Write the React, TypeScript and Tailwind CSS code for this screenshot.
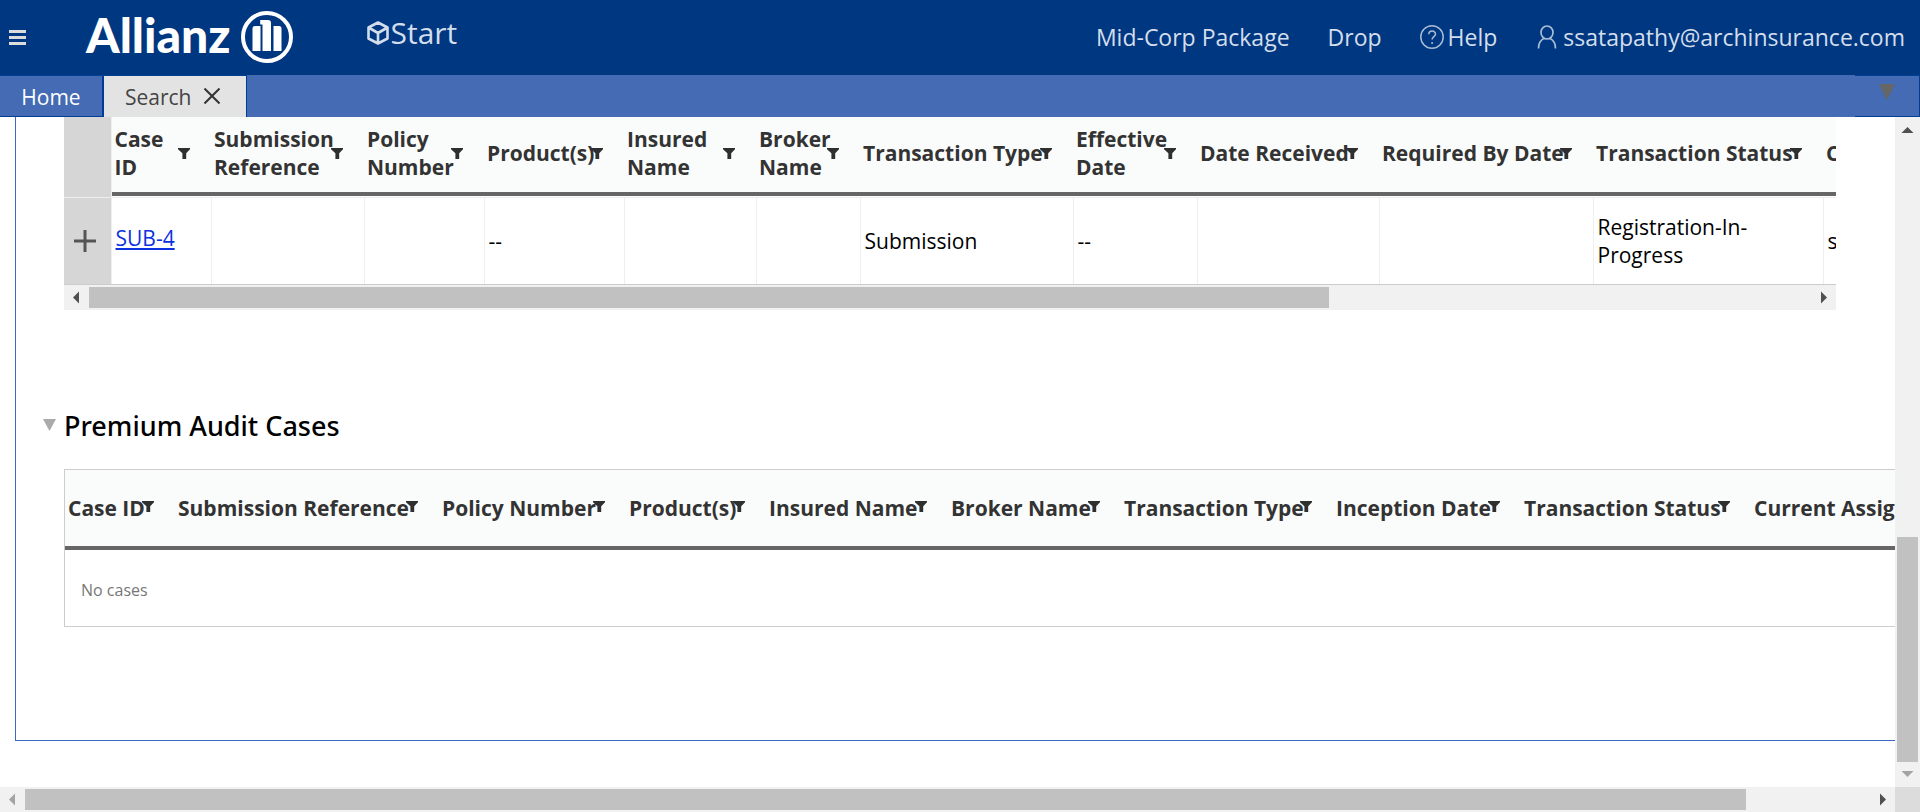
import React from 'react';

type Column = { label: string; width: number; narrow?: boolean; value?: string };

const submissionColumns: Column[] = [
  { label: 'Case ID', width: 100, narrow: true },
  { label: 'Submission Reference', width: 153, narrow: true },
  { label: 'Policy Number', width: 120, narrow: true },
  { label: 'Product(s)', width: 140, value: '--' },
  { label: 'Insured Name', width: 132, narrow: true },
  { label: 'Broker Name', width: 104, narrow: true },
  { label: 'Transaction Type', width: 213, value: 'Submission' },
  { label: 'Effective Date', width: 124, narrow: true, value: '--' },
  { label: 'Date Received', width: 182 },
  { label: 'Required By Date', width: 214 },
  { label: 'Transaction Status', width: 230, value: 'Registration-In-Progress' },
  { label: 'Current Assignment', width: 240, value: 'ssatapathy' },
];

const auditColumns: Column[] = [
  { label: 'Case ID', width: 110 },
  { label: 'Submission Reference', width: 264 },
  { label: 'Policy Number', width: 187 },
  { label: 'Product(s)', width: 140 },
  { label: 'Insured Name', width: 182 },
  { label: 'Broker Name', width: 173 },
  { label: 'Transaction Type', width: 212 },
  { label: 'Inception Date', width: 188 },
  { label: 'Transaction Status', width: 230 },
  { label: 'Current Assignment', width: 240 },
];

function FilterButton({ label }: { label: string }) {
  return (
    <button type="button" aria-label={`Filter ${label}`} className="absolute top-[31px] right-[21px]">
      <svg viewBox="0 0 12 11" className="h-[11px] w-3" fill="#2f2f2f" aria-hidden="true">
        <path d="M0 0h12v1.2L8.2 5.2V11H4.4V5.2L0 1.2z" />
      </svg>
    </button>
  );
}

function HeaderLabel({ column }: { column: Column }) {
  return (
    <>
      <span className={column.narrow ? 'w-16' : 'whitespace-nowrap'}>{column.label}</span>
      <FilterButton label={column.label} />
    </>
  );
}

function Columns({ columns }: { columns: Column[] }) {
  return (
    <>
      {columns.map((c) => (
        <col key={c.label} style={{ width: c.width }} />
      ))}
    </>
  );
}

function Arrow({ direction, muted }: { direction: 'left' | 'right' | 'up' | 'down'; muted?: boolean }) {
  const points = {
    left: '9,12.5 15,6.5 15,18.5',
    right: '16,12.5 10,6.5 10,18.5',
    up: '12.5,10 6.5,16 18.5,16',
    down: '12.5,15 6.5,9 18.5,9',
  };
  return (
    <svg viewBox="0 0 25 25" className="size-[25px] shrink-0" fill={muted ? '#a3a3a3' : '#505050'} aria-hidden="true">
      <polygon points={points[direction]} />
    </svg>
  );
}

function HorizontalBar({ size, muted }: { size: number; muted?: boolean }) {
  return (
    <div className="flex h-[25px] bg-[#f1f1f1]">
      <Arrow direction="left" muted={muted} />
      <div className="min-w-0 flex-1 py-0.5">
        <div className="h-full bg-[#c1c1c1]" style={{ width: `${size}%` }} />
      </div>
      <Arrow direction="right" />
    </div>
  );
}

function TopBar() {
  return (
    <header className="flex h-[75px] shrink-0 items-center bg-[#003781] text-[#d3deec]">
      <button type="button" aria-label="Menu" className="ml-[9px] flex w-[17px] flex-col gap-[3px]">
        <span className="h-[3px] bg-[#dcdcdc]" />
        <span className="h-[3px] bg-[#dcdcdc]" />
        <span className="h-[3px] bg-[#dcdcdc]" />
      </button>
      <a href="#home" className="ml-[60px] flex items-center gap-[10px] pb-0.5 text-white">
        <span className="pb-1 font-[Lato,sans-serif] text-[48px] leading-[60px] font-black">Allianz</span>
        <svg viewBox="0 0 52 52" className="size-[52px]" fill="none" aria-hidden="true">
          <circle cx="26" cy="26" r="24" stroke="currentColor" strokeWidth="4" />
          <path
            fill="currentColor"
            d="M11.500 40V17.500q0-2.500 2.500-2.500H19.500V40zM21.500 40V13.500h-2.300V9H27q3 0 3 3V40zM32.500 40V15H38q2.500 0 2.500 2.500V40z"
          />
        </svg>
      </a>
      <a href="#start" className="mb-2.5 ml-[74px] flex items-center gap-0.5 text-[30px] leading-10">
        <svg viewBox="0 0 22 24" className="h-6 w-[22px]" fill="none" stroke="currentColor" strokeWidth="2.600" strokeLinejoin="round" aria-hidden="true">
          <path d="M11 1.500 20.500 6.500v11L11 22.500 1.500 17.500v-11zM1.500 6.500 11 12l9.500-5.500M11 12v10.500" />
        </svg>
        Start
      </a>
      <nav className="mr-[15px] mb-0.5 ml-auto flex items-center text-[23px] leading-8">
        <a href="#package">Mid-Corp Package</a>
        <a href="#drop" className="ml-[38px]">Drop</a>
        <a href="#help" className="ml-[38px] flex items-center gap-1">
          <svg viewBox="0 0 24 24" className="size-6 opacity-80" fill="none" stroke="currentColor" strokeWidth="1.500" aria-hidden="true">
            <circle cx="12" cy="12" r="11.200" />
            <path d="M8.800 9.300c0-4.300 6.700-4.200 6.700-.3 0 2.700-3.400 2.700-3.400 5.500M12.100 17v2" />
          </svg>
          Help
        </a>
        <a href="#profile" className="ml-10 flex items-center gap-1.5">
          <svg viewBox="0 0 20 24" className="h-6 w-5 opacity-80" fill="none" stroke="currentColor" strokeWidth="1.700" aria-hidden="true">
            <ellipse cx="10" cy="7.500" rx="6" ry="6.500" />
            <path d="M1.500 23.500c0-5 2-8.300 5.600-10.200M18.500 23.500c0-5-2-8.300-5.600-10.200" />
          </svg>
          ssatapathy@archinsurance.com
        </a>
      </nav>
    </header>
  );
}

function TabBar() {
  return (
    <div role="tablist" className="flex h-[42px] shrink-0 bg-[#446bb3] text-[21px] leading-[30px]">
      <button type="button" role="tab" aria-selected="false" className="w-[104px] border-y border-r-2 border-[#003e95] pt-0.5 text-white">
        Home
      </button>
      <div className="flex w-[143px] items-center border-t border-r border-[#003e95] bg-[#e3e3e3] pl-[21px] text-[#444]">
        <button type="button" role="tab" aria-selected="true">
          Search
        </button>
        <button type="button" aria-label="Close Search" className="mb-0.5 ml-3">
          <svg viewBox="0 0 16 16" className="size-4" stroke="#333" strokeWidth="2" aria-hidden="true">
            <path d="M.5.5l15 15M15.500.5l-15 15" />
          </svg>
        </button>
      </div>
      <button type="button" aria-label="Tab list" className="ml-auto flex w-[65px] justify-end border-y border-r border-[#003e95] pt-2 pr-6">
        <svg viewBox="0 0 16 16" className="size-4" fill="#666" aria-hidden="true">
          <path d="M0 0h16L8 16z" />
        </svg>
      </button>
    </div>
  );
}

function SubmissionTable() {
  return (
    <div className="mr-[59px] ml-12">
      <div className="overflow-hidden border-b border-[#ccc]">
        <table className="w-0 table-fixed border-collapse text-[21px] leading-7 text-black">
          <colgroup>
            <col style={{ width: 47 }} />
            <Columns columns={submissionColumns} />
          </colgroup>
          <thead>
            <tr className="h-20 bg-[#fafcfb] text-[#333]">
              <th className="border-r border-b border-[#eee] bg-[#d6d6d6]" aria-label="Expand" />
              {submissionColumns.map((c) => (
                <th key={c.label} scope="col" className="border-b border-[#eee] p-0 text-left font-bold">
                  <div className="relative flex h-[79px] items-center border-b-4 border-[#666] pb-1 pl-[3px]">
                    <HeaderLabel column={c} />
                  </div>
                </th>
              ))}
            </tr>
          </thead>
          <tbody>
            <tr className="h-[87px]">
              <td className="border-r border-[#eee] bg-[#d6d6d6] p-0">
                <button type="button" aria-label="Expand SUB-4" className="flex w-full justify-center pr-1">
                  <svg viewBox="0 0 22 22" className="size-[22px]" stroke="#555" strokeWidth="3" aria-hidden="true">
                    <path d="M0 11h22M11 0v22" />
                  </svg>
                </button>
              </td>
              {submissionColumns.map((c, i) => (
                <td key={c.label} className="border-r border-[#eee] p-0 pl-1">
                  {i === 0 ? (
                    <a href="#sub-4" className="mb-1.5 block text-[#0a32e0] underline decoration-2 underline-offset-2">
                      SUB-4
                    </a>
                  ) : (
                    c.value
                  )}
                </td>
              ))}
            </tr>
          </tbody>
        </table>
      </div>
      <HorizontalBar size={72} />
    </div>
  );
}

function AuditSection() {
  return (
    <section className="mt-24">
      <h2 className="font-['Noto_Sans',sans-serif] text-[27px] leading-10 font-medium text-black">
        <button type="button" aria-expanded="true" className="flex items-center gap-2 pl-[27px]">
          <svg viewBox="0 0 13 12" className="mb-0.5 h-3 w-[13px]" fill="#aaa" aria-hidden="true">
            <path d="M0 0h13L6.500 12z" />
          </svg>
          Premium Audit Cases
        </button>
      </h2>
      <div className="mt-[23px] ml-12 overflow-hidden border border-r-0 border-[#ccc]">
        <table className="w-0 table-fixed border-collapse text-[21px] leading-7">
          <colgroup>
            <Columns columns={auditColumns} />
          </colgroup>
          <thead>
            <tr className="bg-[#fafcfb] text-[#333]">
              {auditColumns.map((c) => (
                <th key={c.label} scope="col" className="p-0 text-left font-bold">
                  <div className="relative flex h-20 items-center border-b-4 border-[#666] pl-[3px]">
                    <HeaderLabel column={c} />
                  </div>
                </th>
              ))}
            </tr>
          </thead>
          <tbody>
            <tr className="h-[76px]">
              <td colSpan={auditColumns.length} className="p-0 pt-1 pl-4 text-base text-[#777]">
                No cases
              </td>
            </tr>
          </tbody>
        </table>
      </div>
    </section>
  );
}

export default function App() {
  return (
    <div className="flex h-screen flex-col overflow-hidden bg-white font-['Open_Sans',sans-serif]">
      <TopBar />
      <TabBar />
      <div className="flex min-h-0 flex-1">
        <main className="min-w-0 flex-1 overflow-hidden">
          <div className="ml-[15px] border-b border-l border-[#3a6abf] pb-[113px]">
            <SubmissionTable />
            <AuditSection />
          </div>
        </main>
        <div className="flex w-[25px] shrink-0 flex-col bg-[#f1f1f1]">
          <Arrow direction="up" />
          <div className="flex min-h-0 flex-1 flex-col justify-end px-0.5">
            <div className="h-[36.3%] bg-[#c1c1c1]" />
          </div>
          <Arrow direction="down" muted />
        </div>
      </div>
      <div className="flex shrink-0">
        <div className="min-w-0 flex-1">
          <HorizontalBar size={93.3} muted />
        </div>
        <div className="size-[25px] bg-[#dcdcdc]" />
      </div>
    </div>
  );
}
